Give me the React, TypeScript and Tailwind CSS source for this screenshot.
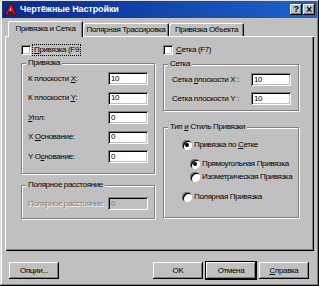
import React from "react";

const raised =
  "bg-[#c0c0c0] shadow-[inset_-1px_-1px_#000,inset_1px_1px_#fff,inset_-2px_-2px_#808080]";
const sunken =
  "bg-white shadow-[inset_1px_1px_#808080,inset_-1px_-1px_#fff,inset_2px_2px_#000,inset_-2px_-2px_#c0c0c0]";
const etched = "border border-[#808080] shadow-[inset_1px_1px_#fff,1px_1px_#fff]";

const Field = ({ value, disabled }: { value: string; disabled?: boolean }) => (
  <div
    className={`w-[40px] h-[13px] shrink-0 flex items-center pl-[3px] leading-none ${
      disabled
        ? "bg-[#c0c0c0] text-[#808080] shadow-[inset_1px_1px_#808080,inset_-1px_-1px_#fff,inset_2px_2px_#000,inset_-2px_-2px_#c0c0c0]"
        : sunken + " text-black"
    }`}
  >
    {value}
  </div>
);

const CheckBox = () => <div className={`w-[10px] h-[10px] shrink-0 ${sunken}`} />;

const Radio = ({ on }: { on?: boolean }) => (
  <div className="w-[10px] h-[10px] shrink-0 rounded-full bg-white shadow-[inset_1px_1px_#808080,inset_2px_2px_#000,inset_-1px_-1px_#fff] flex items-center justify-center">
    {on && <div className="w-[4px] h-[4px] rounded-full bg-black" />}
  </div>
);

const Group = ({
  title,
  className,
  children,
}: {
  title: React.ReactNode;
  className: string;
  children: React.ReactNode;
}) => (
  <div className={`relative ${etched} ${className}`}>
    <span className="absolute -top-[7px] left-[4px] bg-[#c0c0c0] px-[2px] leading-[12px]">
      {title}
    </span>
    {children}
  </div>
);

const Row = ({ label, value, disabled }: { label: React.ReactNode; value: string; disabled?: boolean }) => (
  <div className="flex items-center justify-between h-[13px]">
    <span className={disabled ? "text-[#808080] [text-shadow:1px_1px_#fff]" : ""}>{label}</span>
    <Field value={value} disabled={disabled} />
  </div>
);

const Btn = ({ children, def }: { children: React.ReactNode; def?: boolean }) => (
  <div
    className={`w-[50px] h-[17px] flex items-center justify-center ${raised} ${
      def ? "outline outline-1 outline-black" : ""
    }`}
  >
    {children}
  </div>
);

export default function App() {
  return (
    <div className="w-[319px] h-[286px] bg-[#c0c0c0] flex flex-col px-[2px] pt-[1px] shadow-[inset_-1px_-1px_#000,inset_1px_1px_#dfdfdf,inset_-2px_-2px_#808080,inset_2px_2px_#fff] font-['Liberation_Sans',Arial,sans-serif] text-[8px] tracking-[-0.35px] whitespace-nowrap text-black">
      {/* title */}
      <div className="h-[17px] flex items-center bg-gradient-to-r from-[#0a2a8a] to-[#1e62cc] pl-[2px] pr-[2px]">
        <svg width="13" height="13" viewBox="0 0 13 13">
          <path d="M1 12 L6 1 L8 1 L12 12 L9 12 L8 9 L5 9 L4 12 Z" fill="#e01010" stroke="#400" strokeWidth="0.8" />
          <path d="M5.6 7.5 L7.4 7.5 L6.6 4.5 Z" fill="#fff" />
        </svg>
        <span className="ml-[3px] text-white font-bold text-[9px] tracking-[-0.1px]">Чертёжные Настройки</span>
        <div className="ml-auto flex gap-[1px]">
          <div className={`w-[12px] h-[11px] flex items-center justify-center text-[9px] font-bold leading-none ${raised}`}>?</div>
          <div className={`w-[12px] h-[11px] flex items-center justify-center text-[10px] font-bold leading-none ${raised}`}>×</div>
        </div>
      </div>

      {/* tabs */}
      <div className="mt-[3px] px-[3px]">
        <div className="h-[15px] flex items-end pl-[3px]">
          <div className="relative z-10 h-[16px] -mb-[1px] w-[75px] flex items-center justify-center bg-[#c0c0c0] rounded-t-[2px] shadow-[inset_1px_1px_#fff,inset_-1px_0_#000,inset_-2px_0_#808080]">
            Привязка и Сетка
          </div>
          <div className="h-[13px] w-[86px] flex items-center justify-center rounded-t-[2px] shadow-[inset_1px_1px_#fff,inset_-1px_0_#000,inset_-2px_0_#808080]">
            Полярная Трассировка
          </div>
          <div className="h-[13px] w-[75px] flex items-center justify-center rounded-t-[2px] shadow-[inset_1px_1px_#fff,inset_-1px_0_#000,inset_-2px_0_#808080]">
            Привязка Объекта
          </div>
        </div>

        {/* panel */}
        <div className="h-[215px] pl-[16px] pt-[8px] grid grid-cols-[134px_136px] gap-x-[8px] content-start shadow-[inset_1px_1px_#fff,inset_-1px_-1px_#000,inset_-2px_-2px_#808080]">
          {/* left */}
          <div className="flex flex-col">
            <div className="h-[11px] flex items-center gap-[2px]">
              <CheckBox />
              <span className="outline outline-1 outline-dotted outline-black px-[1px] leading-[10px]">
                <u>П</u>ривязка (F9
              </span>
            </div>
            <Group title="Привязка" className="mt-[8px] h-[111px] pt-[8px] pl-[6px] pr-[6px] flex flex-col gap-[6.5px]">
              <Row label={<>К плоскости <u>X</u>:</>} value="10" />
              <Row label={<>К плоскости <u>Y</u>:</>} value="10" />
              <Row label={<><u>У</u>гол:</>} value="0" />
              <Row label={<>X <u>О</u>снование:</>} value="0" />
              <Row label={<>Y О<u>с</u>нование:</>} value="0" />
            </Group>
            <Group
              title={<span>Полярное расстояние</span>}
              className="mt-[11px] h-[34px] pt-[11px] pl-[6px] pr-[6px]"
            >
              <Row label="Полярное расстояние:" value="0" disabled />
            </Group>
          </div>

          {/* right */}
          <div className="flex flex-col">
            <div className="h-[11px] flex items-center gap-[2px]">
              <CheckBox />
              <span className="px-[1px]">
                <u>С</u>етка (F7)
              </span>
            </div>
            <Group title="Сетка" className="mt-[9px] h-[47px] pt-[8px] pl-[8px] pr-[7px] flex flex-col gap-[6px]">
              <Row label={<>Сетка <u>п</u>лоскости X :</>} value="10" />
              <Row label={<>Сетка плоскости Y :</>} value="10" />
            </Group>
            <Group
              title={<>Тип <u>и</u> Стиль Привязки</>}
              className="mt-[16px] h-[91px] pt-[11px] pl-[18px] flex flex-col"
            >
              <div className="h-[11px] flex items-center gap-[2px]">
                <Radio on />
                <span>
                  Привязка по <u>С</u>етке
                </span>
              </div>
              <div className="mt-[8px] ml-[8px] h-[11px] flex items-center gap-[2px]">
                <Radio on />
                <span>Прямоугольная Привязка</span>
              </div>
              <div className="mt-[2px] ml-[8px] h-[11px] flex items-center gap-[2px]">
                <Radio />
                <span>Изометрическая Привязка</span>
              </div>
              <div className="mt-[9px] h-[11px] flex items-center gap-[2px]">
                <Radio />
                <span>Полярная Привязка</span>
              </div>
            </Group>
          </div>
        </div>
      </div>

      {/* buttons */}
      <div className="mt-[11px] flex pl-[7px] pr-[8px]">
        <Btn>Опции...</Btn>
        <div className="ml-auto flex gap-[3px]">
          <Btn>OK</Btn>
          <Btn def>Отмена</Btn>
          <Btn>
            <u>С</u>правка
          </Btn>
        </div>
      </div>
    </div>
  );
}
